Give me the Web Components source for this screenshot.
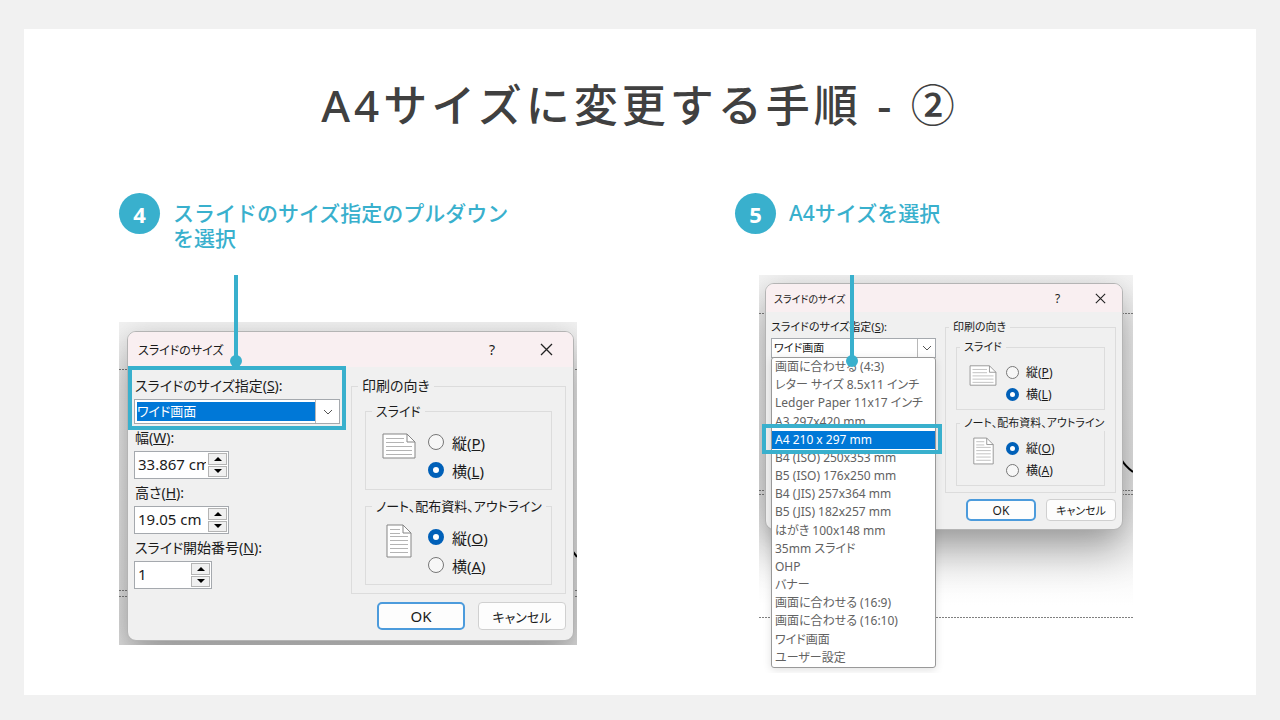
<!DOCTYPE html>
<html lang="ja">
<head>
<meta charset="utf-8">
<meta name="viewport" content="width=device-width, initial-scale=1">
<title>A4サイズに変更する手順 - ②</title>
<style>
  body {
    margin: 0;
    background: #f1f1f1;
    color: #404040;
    font-family: "Noto Sans", "Noto Sans CJK JP", sans-serif;
  }
</style>
</head>
<body>
<slide-page>
  <span slot="title">A4サイズに変更する手順 - ②</span>

  <step-card number="4">
    <span slot="label">スライドのサイズ指定のプルダウンを選択</span>
    <screen-shot variant="combo">
      <size-dialog>
        <combo-box selected></combo-box>
        <spin-field label="幅" key="W" value="33.867 cm"></spin-field>
        <spin-field label="高さ" key="H" value="19.05 cm"></spin-field>
        <spin-field label="スライド開始番号" key="N" value="1" short></spin-field>
      </size-dialog>
    </screen-shot>
  </step-card>

  <step-card number="5">
    <span slot="label">A4サイズを選択</span>
    <screen-shot variant="list">
      <size-dialog compact>
        <combo-box open></combo-box>
      </size-dialog>
    </screen-shot>
  </step-card>
</slide-page>

<script>
const define = (name, render) => customElements.define(name, class extends HTMLElement {
  connectedCallback() {
    if (this.shadowRoot) return;
    this.attachShadow({ mode: 'open' }).innerHTML = render(this);
  }
});

/* The white slide with its heading and two columns of steps */
define('slide-page', () => `
<style>
  :host { display: flex; box-sizing: border-box; min-height: 100vh; padding: 29px 24px 25px; }
  main { flex: 1; background: #fff; padding: 44px 0 20px; }
  h1 { margin: 0 0 56px; text-align: center; font-size: 44px; line-height: 64px; font-weight: 500; letter-spacing: 4px; }
  .steps { display: grid; grid-template-columns: 1fr 1fr; align-items: start; }
</style>
<main>
  <h1><slot name="title"></slot></h1>
  <div class="steps"><slot></slot></div>
</main>`);

/* A numbered step: badge, caption and illustration */
define('step-card', el => `
<style>
  :host { display: block; padding-left: 95px; }
  header { display: flex; align-items: flex-start; gap: 13px; min-height: 58px; color: #39b0cd; }
  .badge { flex: none; display: grid; place-items: center; width: 41px; height: 41px; border-radius: 50%;
    background: #39b0cd; color: #fff; font-size: 22px; line-height: 24px; font-weight: 700; }
  h2 { margin: 8px 0 0; max-width: 344px; font-size: 21px; line-height: 25px; font-weight: 500; }
</style>
<header><div class="badge">${el.getAttribute('number')}</div><h2><slot name="label"></slot></h2></header>
<slot></slot>`);

/* Cropped screen area with the dialog and the callout drawn over it */
define('screen-shot', el => {
  const list = el.getAttribute('variant') === 'list';
  return `
<style>
  :host { display: block; position: relative; width: fit-content; color: #1b1b1b;
    margin: ${list ? '24px 0 0 24px' : '71px 0 0'}; }
  .crop { position: relative; overflow: hidden;
    background: ${list ? 'linear-gradient(#f4f4f4, #e8e8e8 200px, #f0f0f0 260px, #fff 330px)' : 'linear-gradient(#f2f2f2, #e4e4e4)'};
    padding: ${list ? '8px 10px 143px 6px' : '9px 3px 4px 8px'}; }
  .page { position: absolute; left: 0; top: 0; }
  .line, .dot, .frame { position: absolute; z-index: 2; box-sizing: border-box; }
  .line { width: 4px; height: 86px; background: #39b0cd; left: ${list ? 91 : 115}px; top: ${list ? 0 : -47}px; }
  .dot { width: 12px; height: 12px; border-radius: 50%; background: #39b0cd; left: ${list ? 87 : 111}px; top: ${list ? 80 : 33}px; }
  .frame { border: 4px solid #39b0cd; pointer-events: none;
    ${list ? 'left: 3px; top: 149px; width: 180px; height: 30px' : 'left: 9px; top: 44px; width: 218px; height: 64px'}; }
</style>
<div class="crop">
  ${list ? `<svg class="page" width="374" height="398" fill="none" stroke="#808080" stroke-dasharray="2 1" aria-hidden="true">
    <path d="M0 38.500H374M0 215.500H374M0 219.500H374M0 342.500H374"/>
    <path d="M362 184Q366 191 374 197" stroke="#000" stroke-width="2" stroke-dasharray="none"/></svg>`
  : `<svg class="page" width="458" height="323" fill="none" stroke="#808080" stroke-dasharray="2 1" aria-hidden="true">
    <path d="M0 47.500H458M0 268.500H458M0 274.500H458"/>
    <path d="M452 227L458 235" stroke="#000" stroke-width="2" stroke-dasharray="none"/></svg>`}
  <slot></slot>
</div>
<div class="line"></div><div class="dot"></div><div class="frame"></div>`;
});

const landscape = `<svg viewBox="0 0 34 26" aria-hidden="true"><path d="M1 1H25L33 9V25H1Z" fill="#fff" stroke="#858585"/><path d="M25 1V9H33" fill="none" stroke="#858585"/><path d="M4 5.500H22M4 9.500H22M4 13.500H30M4 17.500H30M4 21.500H30" stroke="#b4b4b4"/></svg>`;
const portrait = `<svg viewBox="0 0 26 34" aria-hidden="true"><path d="M1 1H17L25 9V33H1Z" fill="#fff" stroke="#858585"/><path d="M17 1V9H25" fill="none" stroke="#858585"/><path d="M4 5.500H14M4 9.500H14M4 12.500H22M4 16.500H22M4 20.500H22M4 24.500H22M4 28.500H22" stroke="#b4b4b4"/></svg>`;

/* The slide size dialog. The compact form is used with the list open. */
define('size-dialog', () => `
<style>
  :host { display: block; position: relative; box-sizing: border-box; width: 447px; border: 1px solid #b4b4b4; border-radius: 9px;
    background: #f0f0f0; font-size: 14px; font-feature-settings: "palt";
    box-shadow: 0 20px 40px rgba(0,0,0,.32), 0 2px 24px rgba(0,0,0,.08);
    --title: 35px; --title-font: 12px; --small: 13px; --radio-font: 15px; --legend: 20px; --row: 28px; --label: 26px;
    --radio: 16px; --button: 88px; --left: 210px; --list-font: 14px; }
  :host([compact]) { width: 358px; font-size: 11px;
    --title: 28px; --title-font: 10px; --small: 11px; --radio-font: 12px; --legend: 16px; --row: 22px; --label: 22px;
    --radio: 13px; --button: 70px; --left: 174px; --list-font: 12px; }
  .title { display: flex; align-items: center; height: var(--title); padding-left: 10px; background: #f9eff1;
    border-radius: 8px 8px 0 0; font-size: var(--title-font); }
  .title span { flex: 1; }
  .title button { border: 0; padding: 0; background: none; color: inherit; font: inherit; font-size: 14px; width: 54px; height: 28px; }
  .title svg { display: block; margin: auto; width: 13px; height: 13px; }
  .body { display: grid; grid-template-columns: var(--left) minmax(0, 1fr); padding: 0 7px 10px; }
  .fields { padding-top: 6px; }
  .side { padding-top: 9px; }
  fieldset { min-width: 0; margin: 0; border: 1px solid #dcdcdc; }
  legend { padding: 0 4px; line-height: var(--legend); white-space: nowrap; }
  .outer { margin-left: 6px; padding: 5px 13px 8px; }
  .outer > legend { margin-left: -7px; }
  .inner { display: flex; align-items: flex-start; padding: 7px 0 5px 13px; }
  .inner > legend { margin-left: -7px; font-size: var(--small); }
  .inner + .inner { margin-top: 6px; }
  .icon { flex: none; display: grid; justify-items: center; width: 40px; padding-top: 5px; }
  .icon.tall { padding-top: 1px; }
  .icon svg { display: block; width: 34px; height: 26px; }
  .icon.tall svg { width: 26px; height: 34px; }
  .radios { margin-left: 9px; font-size: var(--radio-font); }
  label { display: flex; align-items: center; gap: 8px; height: var(--row); white-space: nowrap; }
  input { appearance: none; box-sizing: border-box; flex: none; width: var(--radio); height: var(--radio); margin: 0;
    border: 1px solid #777; border-radius: 50%; background: #f7f7f7; }
  input:checked { border: 5px solid #0060b8; background: #fff; }
  .actions { display: flex; justify-content: flex-end; gap: 13px; margin-top: 8px; font-size: var(--small); }
  .actions button { box-sizing: border-box; width: var(--button); height: var(--row); padding: 0; border: 1px solid #d0d0d0;
    border-radius: 4px; background: #fdfdfd; color: inherit; font: inherit; font-feature-settings: inherit; }
  .actions .ok { border: 2px solid #4c9bdc; border-radius: 5px; font-size: var(--radio-font); }
  :host([compact]) .title { padding-left: 8px; }
  :host([compact]) .title button { width: 43px; font-size: 12px; }
  :host([compact]) .title svg { width: 11px; height: 11px; }
  :host([compact]) .body { padding: 0 5px 8px; }
  :host([compact]) .fields { padding-top: 4px; }
  :host([compact]) .side { padding: 7px 1px 0 0; }
  :host([compact]) .outer { margin-left: 0; padding: 4px 10px 6px; }
  :host([compact]) .inner { padding: 6px 0 4px 10px; }
  :host([compact]) .inner + .inner { margin-top: 5px; }
  :host([compact]) .icon { width: 32px; padding-top: 4px; }
  :host([compact]) .icon svg { width: 28px; height: 21px; }
  :host([compact]) .icon.tall { padding-top: 0; }
  :host([compact]) .icon.tall svg { width: 21px; height: 28px; }
  :host([compact]) .radios { margin-left: 7px; }
  :host([compact]) label { gap: 7px; }
  :host([compact]) input:checked { border-width: 4px; }
  :host([compact]) .actions { gap: 10px; margin-top: 6px; }
</style>
<div class="title"><span>スライドのサイズ</span><button type="button" aria-label="ヘルプ">?</button>
  <button type="button" aria-label="閉じる"><svg viewBox="0 0 13 13" fill="none" stroke="#222" stroke-width="1.300"><path d="M1 1L12 12M12 1L1 12"/></svg></button></div>
<div class="body">
  <div class="fields"><slot></slot></div>
  <div class="side">
    <fieldset class="outer"><legend>印刷の向き</legend>
      <fieldset class="inner"><legend>スライド</legend>
        <div class="icon">${landscape}</div>
        <div class="radios">
          <label><input type="radio" name="slide"><span>縦(<u>P</u>)</span></label>
          <label><input type="radio" name="slide" checked><span>横(<u>L</u>)</span></label>
        </div>
      </fieldset>
      <fieldset class="inner"><legend>ノート、配布資料、アウトライン</legend>
        <div class="icon tall">${portrait}</div>
        <div class="radios">
          <label><input type="radio" name="notes" checked><span>縦(<u>O</u>)</span></label>
          <label><input type="radio" name="notes"><span>横(<u>A</u>)</span></label>
        </div>
      </fieldset>
    </fieldset>
    <div class="actions"><button type="button" class="ok">OK</button><button type="button">キャンセル</button></div>
  </div>
</div>`);

const sizes = ['画面に合わせる (4:3)', 'レター サイズ 8.5x11 インチ', 'Ledger Paper 11x17 インチ', 'A3 297x420 mm',
  'A4 210 x 297 mm', 'B4 (ISO) 250x353 mm', 'B5 (ISO) 176x250 mm', 'B4 (JIS) 257x364 mm', 'B5 (JIS) 182x257 mm',
  'はがき 100x148 mm', '35mm スライド', 'OHP', 'バナー', '画面に合わせる (16:9)', '画面に合わせる (16:10)', 'ワイド画面', 'ユーザー設定'];

/* Drop-down for the paper size, optionally with its list shown */
define('combo-box', el => `
<style>
  :host { display: block; position: relative; }
  label { display: block; line-height: var(--label); white-space: nowrap; }
  .box { display: flex; position: relative; box-sizing: border-box; width: 206px; height: 25px; margin-left: -1px;
    border: 1px solid #a5a9ae; background: #fff; }
  select { appearance: none; flex: 1; min-width: 0; margin: 0; border: 0; padding: 2px 24px 2px 2px; border-radius: 0; background: none;
    color: inherit; font: inherit; font-size: var(--small); line-height: 19px; font-feature-settings: inherit; }
  :host([selected]) select { color: #fff; background: #0078d7 content-box; }
  .arrow { position: absolute; right: 0; top: 0; bottom: 0; width: 23px; border-left: 1px solid #b8b8b8;
    display: grid; place-items: center; pointer-events: none; }
  .arrow svg { width: 10px; height: 6px; }
  :host([open]) .box { width: 165px; height: 20px; margin: 0; }
  :host([open]) select { padding: 0 18px 0 2px; line-height: 18px; }
  :host([open]) .arrow { width: 17px; }
  ul { display: grid; grid-auto-rows: 1fr; position: absolute; left: 0; top: 100%; z-index: 1; box-sizing: border-box;
    width: 165px; height: 311px; margin: -1px 0 0; padding: 0; border: 1px solid #999; border-radius: 3px; background: #fff;
    box-shadow: 0 2px 8px rgba(0,0,0,.12); list-style: none; color: #626262; font-size: var(--list-font); }
  li { line-height: 18px; padding-left: 3px; white-space: nowrap; }
  li[aria-selected="true"] { background: #0078d7; color: #fff; }
</style>
<label for="size">スライドのサイズ指定(<u>S</u>):</label>
<div class="box"><select id="size"><option>ワイド画面</option></select>
  <span class="arrow"><svg viewBox="0 0 10 6" fill="none" stroke="#555"><path d="M1 1L5 5L9 1"/></svg></span></div>
${el.hasAttribute('open') ? `<ul role="listbox">${sizes.map((s, i) => `<li role="option" aria-selected="${i === 4}">${s}</li>`).join('')}</ul>` : ''}`);

/* Text box with up and down buttons */
define('spin-field', el => `
<style>
  :host { display: block; }
  label { display: block; line-height: 27px; white-space: nowrap; }
  .box { display: flex; box-sizing: border-box; width: 95px; height: 28px; margin-left: -1px; padding: 1px;
    border: 1px solid #a5a9ae; background: #fff; }
  :host([short]) .box { width: 78px; }
  input { flex: 1; min-width: 0; margin: 0; border: 0; padding: 0 2px 3px 2px; background: none; color: inherit; font: inherit; font-size: 15px; }
  .spin { display: grid; grid-template-rows: 1fr 1fr; gap: 1px; width: 19px; }
  button { display: grid; place-items: center; padding: 0; border: 1px solid #b4b4b4; background: #f0f0f0; }
  svg { display: block; width: 8px; height: 4px; }
</style>
<label for="value">${el.getAttribute('label')}(<u>${el.getAttribute('key')}</u>):</label>
<div class="box"><input id="value" type="text" value="${el.getAttribute('value')}">
  <div class="spin"><button type="button" aria-label="増やす"><svg viewBox="0 0 8 4"><path d="M4 0L8 4H0Z" fill="#000"/></svg></button>
  <button type="button" aria-label="減らす"><svg viewBox="0 0 8 4"><path d="M0 0H8L4 4Z" fill="#000"/></svg></button></div></div>`);
</script>
</body>
</html>
